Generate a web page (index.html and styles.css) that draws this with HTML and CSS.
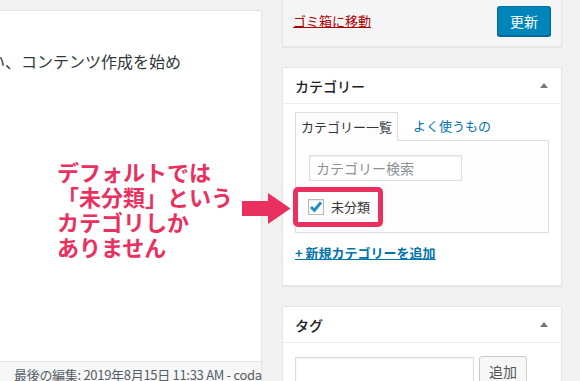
FILE: index.html
```html
<!DOCTYPE html>
<html lang="ja">
<head>
	<meta charset="UTF-8" />
	<title>投稿の編集</title>
	<link rel="stylesheet" href="styles.css">
</head>
<body>
	<div class="screen">
		<div class="main">
			<div class="editor">
				<p class="prompt">い、コンテンツ作成を始め</p>
			</div>
			<div class="status">最後の編集: 2019年8月15日 11:33 AM - coda</div>
		</div>

		<div class="side">
			<div class="box publish">
				<a class="trash" href="#">ゴミ箱に移動</a>
				<button class="btn btn-primary" type="button">更新</button>
			</div>

			<div class="box">
				<div class="box-head">
					<h2>カテゴリー</h2>
					<span class="toggle"></span>
				</div>
				<div class="box-body cats">
					<ul class="tabs">
						<li class="active">カテゴリー一覧</li>
						<li><a href="#">よく使うもの</a></li>
					</ul>
					<div class="tab-panel">
						<input class="field search" type="text" placeholder="カテゴリー検索" />
						<label class="cat-item">
							<span class="check">
								<svg width="14" height="14" viewBox="0 0 14 14">
									<path d="M2 7 L5.4 10.3 L12 2.4" fill="none" stroke="#1e8cbe" stroke-width="3" stroke-linejoin="miter"/>
								</svg>
							</span>
							未分類
						</label>
						<span class="highlight"></span>
					</div>
					<a class="add-new" href="#">+ 新規カテゴリーを追加</a>
				</div>
			</div>

			<div class="box">
				<div class="box-head">
					<h2>タグ</h2>
					<span class="toggle"></span>
				</div>
				<div class="box-body tags">
					<input class="field tag-input" type="text" />
					<button class="btn" type="button">追加</button>
				</div>
			</div>
		</div>

		<!-- annotation drawn over the screenshot -->
		<p class="note">デフォルトでは<br>「未分類」という<br>カテゴリしか<br>ありません</p>
		<svg class="arrow" width="49" height="32" viewBox="0 0 49 32">
			<polygon points="0,8 26,8 26,0 48.5,15.5 26,31 26,23 0,23" fill="#e9305e"/>
		</svg>
	</div>
</body>
</html>
```

FILE: styles.css
```css
* {
	box-sizing: border-box;
}

body {
	margin: 0;
	font-family: "Noto Sans CJK JP", "DejaVu Sans", sans-serif;
	color: #23282d;
	background-color: #f1f1f1;
}

.screen {
	position: relative;
	display: flex;
	width: 580px;
	height: 381px;
	overflow: hidden;
}

/* left: editor */

.main {
	display: flex;
	flex-direction: column;
	width: 262px;
	padding-top: 10px;
}

.editor {
	height: 355px;
	background-color: #fff;
	border-top: 1px solid #e2e4e7;
	border-right: 1px solid #e2e4e7;
	overflow: hidden;
}

.prompt {
	margin: 41px 0 0 -11px;
	white-space: nowrap;
	font-size: 16px;
	line-height: 18px;
	color: #32373c;
}

.status {
	height: 20px;
	padding: 4px 0 0 14px;
	background-color: #f7f7f7;
	border-top: 1px solid #e5e5e5;
	border-right: 1px solid #e2e4e7;
	font-size: 13px;
	line-height: 18px;
	letter-spacing: -0.3px;
	color: #555d66;
	white-space: nowrap;
}

/* right: meta boxes */

.side {
	display: flex;
	flex-direction: column;
	gap: 20px;
	width: 280px;
	margin-left: 20px;
}

.box {
	background-color: #fff;
	border: 1px solid #e5e5e5;
	box-shadow: 0 1px 1px rgba(0, 0, 0, 0.04);
}

.publish {
	display: flex;
	align-items: center;
	justify-content: space-between;
	height: 48px;
	padding: 6px 10px 10px;
	border-top: none;
	background-color: #f5f5f5;
}

.trash {
	font-size: 13px;
	line-height: 16px;
	color: #a00;
}

.btn {
	height: 28px;
	padding: 0 10px;
	font-family: inherit;
	font-size: 13px;
	line-height: 26px;
	color: #555;
	background-color: #f7f7f7;
	border: 1px solid #ccc;
	border-radius: 3px;
	box-shadow: 0 1px 0 #ccc;
}

.btn-primary {
	height: 30px;
	padding: 0 12px;
	font-size: 14px;
	line-height: 28px;
	color: #fff;
	background-color: #0085ba;
	border-color: #0073aa #006799 #006799;
	box-shadow: 0 1px 0 #006799;
}

.box-head {
	display: flex;
	align-items: center;
	justify-content: space-between;
	height: 36px;
	padding: 0 13px 0 12px;
	border-bottom: 1px solid #eee;
}

.box-head h2 {
	margin: 0;
	font-size: 14px;
	font-weight: 500;
	line-height: 20px;
	color: #1d2125;
}

.toggle {
	width: 0;
	height: 0;
	border-left: 4px solid transparent;
	border-right: 4px solid transparent;
	border-bottom: 5px solid #72777c;
}

.box-body {
	padding: 0 12px;
}

.cats {
	padding-top: 8px;
	padding-bottom: 22px;
}

.tabs {
	display: flex;
	align-items: center;
	gap: 10px;
	margin: 0;
	padding: 0;
	list-style: none;
	font-size: 13px;
	line-height: 16px;
}

.tabs li {
	padding: 6px 5px;
}

.tabs .active {
	position: relative;
	z-index: 1;
	height: 29px;
	margin-bottom: -1px;
	color: #32373c;
	background-color: #fdfdfd;
	border: 1px solid #ddd;
	border-bottom: none;
}

.tabs a {
	color: #0073aa;
	text-decoration: none;
}

.tab-panel {
	position: relative;
	display: flex;
	flex-direction: column;
	align-items: flex-start;
	height: 93px;
	padding: 14px 12px 0 13px;
	background-color: #fdfdfd;
	border: 1px solid #ddd;
}

.field {
	height: 26px;
	padding: 0 6px;
	font-family: inherit;
	font-size: 14px;
	color: #32373c;
	background-color: #fff;
	border: 1px solid #ddd;
	box-shadow: inset 0 1px 2px rgba(0, 0, 0, 0.07);
	outline: none;
}

.field::placeholder {
	color: #8b9196;
}

.search {
	width: 153px;
}

.cat-item {
	display: flex;
	align-items: center;
	gap: 7px;
	margin: 18px 0 0 -1px;
	font-size: 13px;
	line-height: 16px;
	color: #32373c;
}

.check {
	display: flex;
	align-items: center;
	justify-content: center;
	width: 16px;
	height: 16px;
	background-color: #fff;
	border: 1px solid #b4b9be;
	box-shadow: inset 0 1px 2px rgba(0, 0, 0, 0.1);
}

.highlight {
	position: absolute;
	left: -3px;
	top: 46px;
	width: 90px;
	height: 40px;
	border: 5px solid #e9305e;
	border-radius: 5px;
}

.add-new {
	display: inline-block;
	margin-top: 11px;
	font-size: 13px;
	font-weight: 700;
	line-height: 18px;
	color: #0073aa;
}

.tags {
	display: flex;
	gap: 5px;
	padding-top: 13px;
	padding-bottom: 20px;
}

.tag-input {
	width: 179px;
	height: 30px;
	margin-top: 1px;
}

.tags .btn {
	width: 48px;
	height: 30px;
	padding: 0;
	font-size: 14px;
}

/* annotation */

.note {
	position: absolute;
	left: 57px;
	top: 159px;
	margin: 0;
	font-size: 22px;
	font-weight: 700;
	line-height: 25px;
	color: #e9305e;
}

.arrow {
	position: absolute;
	left: 242px;
	top: 193px;
}
```
